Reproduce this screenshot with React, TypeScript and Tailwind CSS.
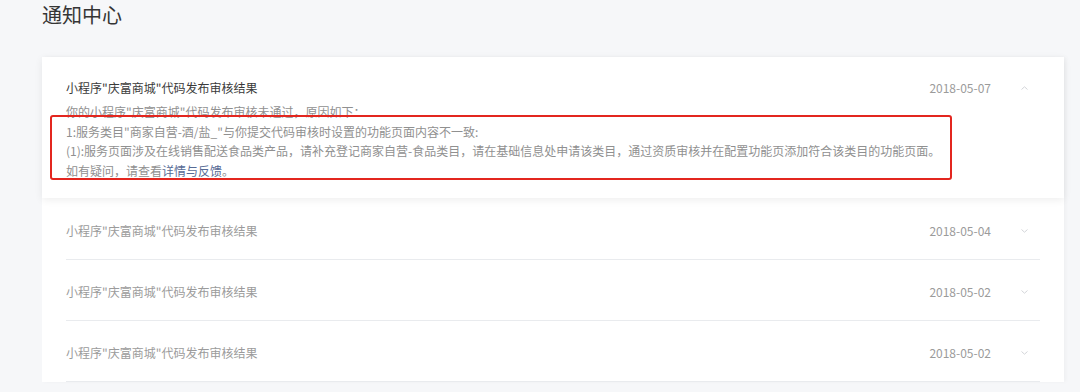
import React from "react";

const font = { fontFamily: '"Noto Sans CJK SC", "Noto Sans", sans-serif' };

function Caret({ up = false }: { up?: boolean }) {
  return (
    <svg width="7" height="4" viewBox="0 0 7 4" className="shrink-0">
      <path
        d={up ? "M0.5 3.5 L3.5 0.8 L6.5 3.5" : "M0.5 0.5 L3.5 3.2 L6.5 0.5"}
        fill="none"
        stroke="#d3d5d9"
        strokeWidth="1"
      />
    </svg>
  );
}

const rows = [
  { title: '小程序"庆富商城"代码发布审核结果', date: "2018-05-04" },
  { title: '小程序"庆富商城"代码发布审核结果', date: "2018-05-02" },
  { title: '小程序"庆富商城"代码发布审核结果', date: "2018-05-02" },
];

export default function App() {
  return (
    <div className="h-[392px] w-[1080px] overflow-hidden bg-[#f6f7f9]" style={font}>
      <div className="pl-[42px] pr-4 pt-[2px]">
        <h1 className="text-[20px] leading-[26px] font-normal text-[#353535]">通知中心</h1>

        <div className="mt-[29px] w-[1022px] bg-white shadow-[2px_0_4px_rgba(0,0,0,0.03)]">
          {/* expanded item */}
          <div className="relative bg-white px-6 pt-[22px] pb-[18px] shadow-[0_2px_8px_rgba(0,0,0,0.07)]">
            <div className="flex items-center pr-3 text-[12px] leading-[18px]">
              <div className="flex-1 text-[#3a3a3a]">小程序"庆富商城"代码发布审核结果</div>
              <div className="text-[#9b9b9b]">2018-05-07</div>
              <div className="ml-[30px] flex w-[7px] justify-center">
                <Caret up />
              </div>
            </div>
            <div className="mt-[5px] text-[12px] leading-[19.5px] text-[#909090]">
              <p>你的小程序"庆富商城"代码发布审核未通过，原因如下：</p>
              <p>1:服务类目"商家自营-酒/盐_"与你提交代码审核时设置的功能页面内容不一致:</p>
              <p>
                (1):服务页面涉及在线销售配送食品类产品，请补充登记商家自营-食品类目，请在基础信息处申请该类目，通过资质审核并在配置功能页添加符合该类目的功能页面。
              </p>
              <p>
                如有疑问，请查看<span className="text-[#576b95]">详情与反馈</span>。
              </p>
            </div>
            {/* annotation box */}
            <div className="pointer-events-none absolute left-[8px] top-[58px] h-[65px] w-[902px] rounded-[3px] border-[2.5px] border-[#e3261f]" />
          </div>

          {/* collapsed items */}
          <div className="px-6 pt-px">
            {rows.map((r, i) => (
              <div
                key={i}
                className="flex h-[61px] items-center border-b border-[#e9ebee] pt-[3px] pr-3 text-[12px] leading-[18px]"
              >
                <div className="flex-1 text-[#9b9b9b]">{r.title}</div>
                <div className="text-[#9b9b9b]">{r.date}</div>
                <div className="ml-[30px] flex w-[7px] justify-center">
                  <Caret />
                </div>
              </div>
            ))}
          </div>
        </div>
      </div>
    </div>
  );
}
